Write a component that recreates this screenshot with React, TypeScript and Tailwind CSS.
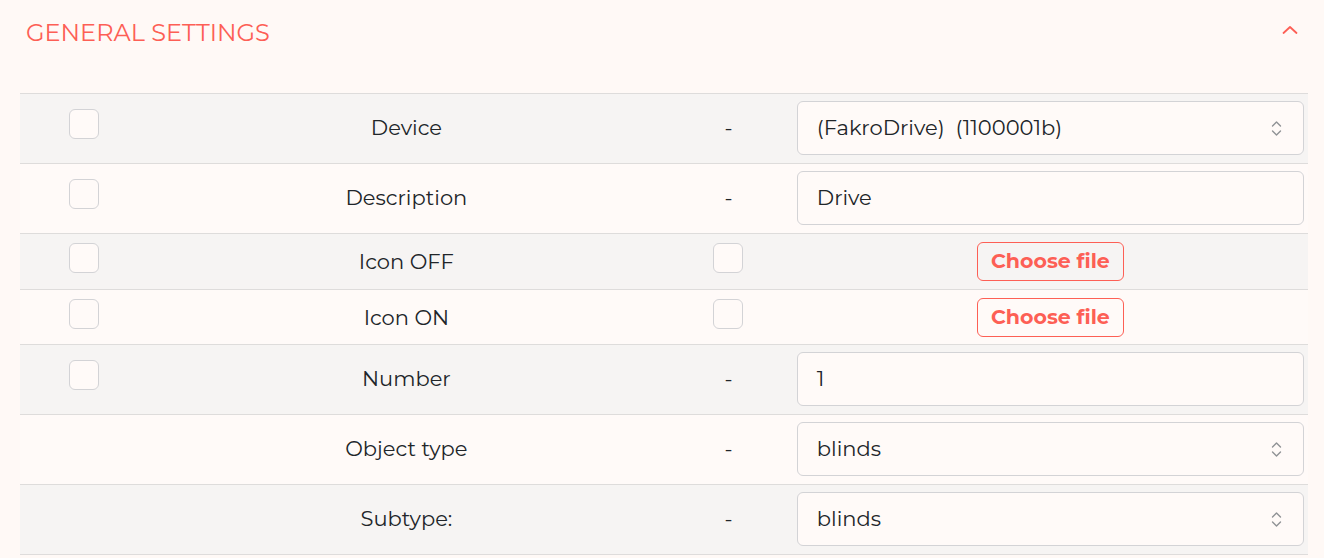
import { useState } from 'react';

type Row = {
  label: string;
  check: boolean;
  kind: 'select' | 'input' | 'file';
  value?: string;
  shaded: boolean;
};

const rows: Row[] = [
  { label: 'Device', check: true, kind: 'select', value: '(FakroDrive)  (1100001b)', shaded: true },
  { label: 'Description', check: true, kind: 'input', value: 'Drive', shaded: false },
  { label: 'Icon OFF', check: true, kind: 'file', shaded: true },
  { label: 'Icon ON', check: true, kind: 'file', shaded: false },
  { label: 'Number', check: true, kind: 'input', value: '1', shaded: true },
  { label: 'Object type', check: false, kind: 'select', value: 'blinds', shaded: false },
  { label: 'Subtype:', check: false, kind: 'select', value: 'blinds', shaded: true },
];

function Box() {
  return <div className="w-[30px] h-[30px] rounded-md border border-[#d3d3d6] bg-[#fffaf8]" />;
}

function UpDown() {
  return (
    <svg width="13" height="17" viewBox="0 0 13 17" fill="none" stroke="#8f9296" strokeWidth="1.4" strokeLinecap="round" strokeLinejoin="round">
      <path d="M2.5 6 6.5 2l4 4" />
      <path d="M2.5 11 6.5 15l4-4" />
    </svg>
  );
}

export default function App() {
  const [open, setOpen] = useState(true);

  return (
    <div className="min-h-[558px] bg-[#fff9f6] font-['Montserrat','Inter',sans-serif] text-[#212529]">
      <div className="h-[93px] flex items-start justify-between pl-[26px] pr-[26px] pt-[18px]">
        <h2 className="text-[24px] leading-[30px] font-normal text-[#fd5f55]">GENERAL SETTINGS</h2>
        <button onClick={() => setOpen(!open)} className="mt-[7px]">
          <svg width="16" height="10" viewBox="0 0 16 10" fill="none" stroke="#fd5f55" strokeWidth="1.8" strokeLinecap="round" strokeLinejoin="round">
            <path d={open ? 'M1.5 8 8 2l6.5 6' : 'M1.5 2 8 8l6.5-6'} />
          </svg>
        </button>
      </div>

      {open && (
        <div className="ml-5 mr-4 border-b border-[#dedcdb]">
          {rows.map((r, i) => (
            <div
              key={r.label}
              className={`grid grid-cols-[1fr_4fr_1fr_4fr] items-center border-t border-[#dedcdb] ${r.kind === 'file' ? (i === 3 ? 'pt-2 pb-[7px]' : 'py-2') : 'pt-[7px] pb-2'} ${r.shaded ? 'bg-[#f6f4f3]' : 'bg-[#fffaf8]'}`}
            >
              <div className="flex justify-center pb-2">{r.check && <Box />}</div>
              <div className="text-center text-[21px]">{r.label}</div>
              <div className="flex justify-center">
                {r.kind === 'file' ? <div className="pb-2"><Box /></div> : <span className="text-[21px]">-</span>}
              </div>
              <div className="pl-[4px] pr-[4px]">
                {r.kind === 'file' ? (
                  <div className="flex justify-center">
                    <button className="h-[39px] px-[13px] rounded-md border border-[#fd5f55] text-[#fd5f55] font-bold text-[20.5px] leading-none">
                      Choose file
                    </button>
                  </div>
                ) : (
                  <div className="h-[54px] flex items-center justify-between rounded-md border border-[#d3d3d6] bg-[#fffaf8] pl-[19px] pr-[20px] text-[21px]">
                    <span className="whitespace-pre">{r.value}</span>
                    {r.kind === 'select' && <UpDown />}
                  </div>
                )}
              </div>
            </div>
          ))}
        </div>
      )}
    </div>
  );
}
